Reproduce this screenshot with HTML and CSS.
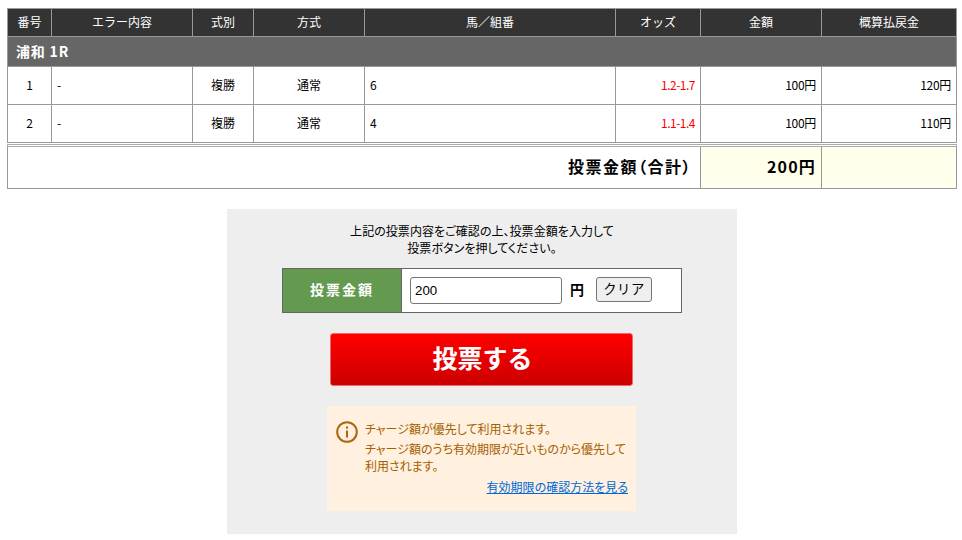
FILE: index.html
```html
<!DOCTYPE html>
<html lang="ja">
<head>
<meta charset="utf-8">
<title>投票内容確認</title>
<link rel="stylesheet" href="styles.css">
</head>
<body>
<table class="bets">
<colgroup><col class="c1"><col class="c2"><col class="c3"><col class="c4"><col class="c5"><col class="c6"><col class="c7"><col class="c8"></colgroup>
<thead>
<tr><th>番号</th><th>エラー内容</th><th>式別</th><th>方式</th><th>馬／組番</th><th>オッズ</th><th>金額</th><th>概算払戻金</th></tr>
</thead>
<tbody>
<tr class="race"><td colspan="8">浦和 1R</td></tr>
<tr class="bet"><td class="ctr">1</td><td>-</td><td class="ctr">複勝</td><td class="ctr">通常</td><td>6</td><td class="odds">1.2-1.7</td><td class="num">100円</td><td class="num">120円</td></tr>
<tr class="bet"><td class="ctr">2</td><td>-</td><td class="ctr">複勝</td><td class="ctr">通常</td><td>4</td><td class="odds">1.1-1.4</td><td class="num">100円</td><td class="num">110円</td></tr>
</tbody>
</table>
<table class="total">
<colgroup><col class="t1"><col class="t2"><col class="t3"></colgroup>
<tr><th>投票金額（合計）</th><td class="sum">200円</td><td class="blank"></td></tr>
</table>
<section class="panel">
<p class="lead">上記の投票内容をご確認の上、投票金額を入力して<br>投票ボタンを押してください。</p>
<div class="amount">
<div class="amount-label">投票金額</div>
<div class="amount-field">
<input class="amount-input" type="text" value="200">
<span class="yen">円</span>
<button class="clear" type="button">クリア</button>
</div>
</div>
<button class="submit" type="button">投票する</button>
<div class="notice">
<div class="notice-row">
<svg class="notice-icon" width="22" height="22" viewBox="0 0 22 22" aria-hidden="true">
<circle cx="11" cy="11" r="9.8" fill="none" stroke="#ad650f" stroke-width="2"/>
<rect x="10" y="9.5" width="2" height="7" fill="#ad650f"/>
<rect x="10" y="5.5" width="2" height="2.2" fill="#ad650f"/>
</svg>
<div class="notice-text">
<p>チャージ額が優先して利用されます。</p>
<p>チャージ額のうち有効期限が近いものから優先して利用されます。</p>
</div>
</div>
<a class="notice-link" href="#">有効期限の確認方法を見る</a>
</div>
</section>
</body>
</html>
```
FILE: styles.css
```css
html, body { margin: 0; padding: 0; background: #fff; }
body {
  padding: 8px 5px 0 7px;
  font-family: "Noto Sans CJK JP", "Liberation Sans", sans-serif;
  font-size: 12px;
  color: #000;
  overflow: hidden;
}
table { table-layout: fixed; }
.bets { border-collapse: collapse; width: 949px; }
.c1 { width: 44px; } .c2 { width: 141px; } .c3 { width: 61px; } .c4 { width: 111px; }
.c5 { width: 251px; } .c6 { width: 85px; } .c7 { width: 121px; } .c8 { width: 135px; }
.bets th, .bets td { border: 1px solid #999; padding: 0 5px 2px; box-sizing: border-box; }
.bets th {
  height: 28px; background: #333; color: #fff; font-weight: normal; text-align: center;
}
.bets .race td {
  height: 30px; background: #666; color: #fff; font-weight: bold; font-size: 14px; padding: 0 8px 2px;
  letter-spacing: 0.8px;
}
.bet td { height: 38px; }
.ctr { text-align: center; }
.num { text-align: right; letter-spacing: -0.3px; }
.odds { text-align: right; color: #f00; letter-spacing: -0.5px; }
.total {
  margin-top: 1px; width: 950px; border-collapse: separate; border-spacing: 0;
  border: 1px solid #999; border-top: 3px double #aaa;
}
.t1 { width: 692px; } .t2 { width: 121px; } .t3 { width: 135px; }
.total th, .total td {
  height: 41px; padding: 0 8px 3px 5px; box-sizing: border-box; border-left: 1px solid #999;
  font-weight: bold; font-size: 16px; text-align: right; letter-spacing: 1.5px;
  font-feature-settings: "palt";
}
.total th { border-left: 0; }
.sum, .blank { background: #ffffeb; }
.total .sum { padding-right: 5px; letter-spacing: 1.2px; }
.panel {
  width: 510px; height: 325px; margin: 20px 0 0 220px; background: #eee;
  display: flex; flex-direction: column; align-items: center; padding-top: 13px; box-sizing: border-box;
}
.lead { margin: 0; text-align: center; line-height: 17px; font-feature-settings: "palt"; letter-spacing: 0.05px; }
.amount {
  margin-top: 12px; width: 400px; height: 45px; box-sizing: border-box; border: 1px solid #666;
  display: flex; background: #fff;
}
.amount-label {
  width: 119px; box-sizing: border-box; background: #639a50; color: #fff; font-weight: bold; font-size: 14px;
  display: flex; align-items: center; justify-content: center; letter-spacing: 2px;
  border-right: 1px solid #666; padding-bottom: 4px;
}
.amount-field { display: flex; align-items: center; flex: 1; padding-left: 8px; }
.amount-input {
  width: 152px; height: 27px; box-sizing: border-box; border: 1px solid #767676; border-radius: 3px;
  padding: 0 4px; font: 13.3px "Liberation Sans", sans-serif; background: #fff; color: #000;
}
.yen { margin-left: 8px; font-weight: bold; font-size: 14px; margin-bottom: 4px; }
.clear {
  margin-left: 12px; margin-bottom: 2px; width: 56px; height: 25px; box-sizing: border-box; border: 1px solid #767676;
  border-radius: 3px; background: #efefef; color: #000; padding: 0 0 2px;
  font: 13.3px "Noto Sans CJK JP", sans-serif; letter-spacing: 0.5px;
}
.submit {
  margin-top: 20px; margin-right: 1px; width: 303px; height: 53px; box-sizing: border-box; padding: 0 0 5px 2px;
  border: 1px solid #ee6a6a; border-radius: 3px; background: linear-gradient(#f00, #c00);
  color: #fff; font: bold 25px "Noto Sans CJK JP", sans-serif;
}
.notice {
  margin-top: 20px; margin-right: 1px; width: 309px; height: 105px; box-sizing: border-box; background: #fff0df;
  padding: 15px 8px 0 9px; color: #a55f00; display: flex; flex-direction: column;
  font-feature-settings: "palt";
}
.notice-row { display: flex; gap: 7px; }
.notice-icon { flex: none; }
.notice-text { line-height: 18px; margin-top: -1px; }
.notice-text p { margin: 0; }
.notice-text p + p { margin-top: 2px; line-height: 17px; }
.notice-link { align-self: flex-end; color: #0068d6; text-decoration: underline; margin-top: 4px; line-height: 18px; }
```
